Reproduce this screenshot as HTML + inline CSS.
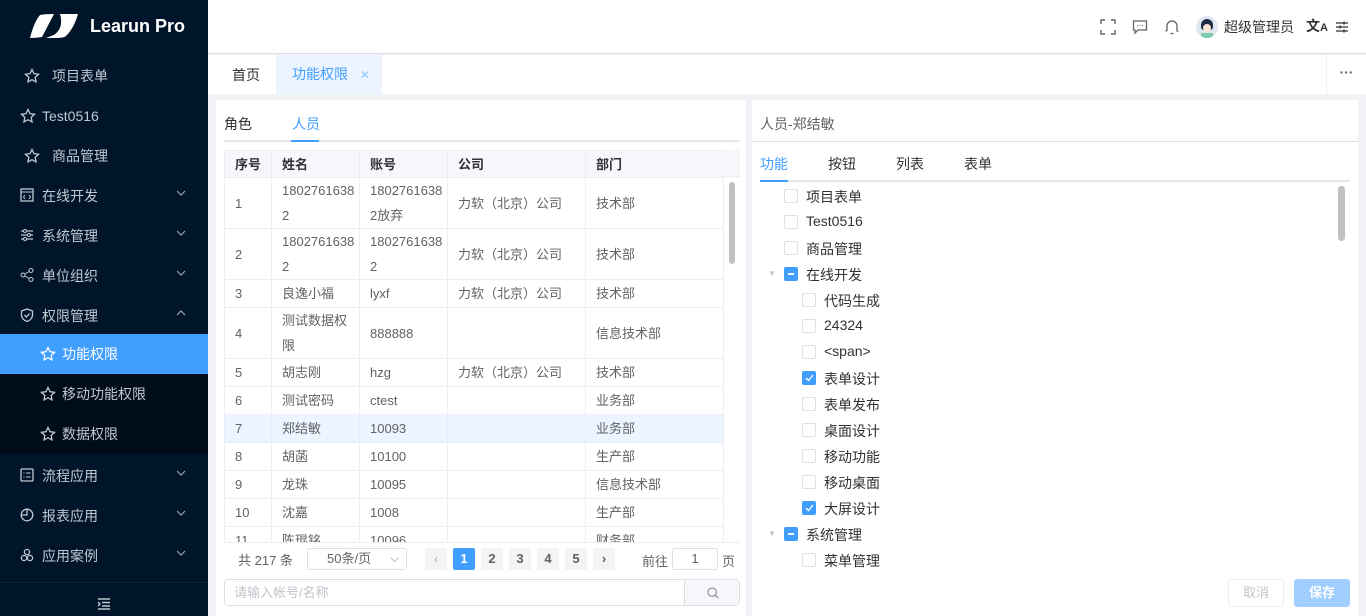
<!DOCTYPE html>
<html><head><meta charset="utf-8"><style>
*{box-sizing:border-box;margin:0;padding:0}
body{width:1366px;height:616px;overflow:hidden;position:relative;font-family:"Liberation Sans","Noto Sans CJK SC",sans-serif;font-size:14px;color:#303133;background:#f0f2f5}
.a{position:absolute}
.side{left:0;top:0;width:208px;height:616px;background:#001529;color:#bfcbd9}
.mi{position:absolute;left:0;width:208px;height:40px;line-height:40px;font-size:14px;color:#c0c8d2}
.mi svg{position:absolute;top:12px}
.mi svg.chev{left:176px;top:14px}
.hdr{left:208px;top:0;width:1158px;height:54px;background:#fff;border-bottom:1px solid #dcdfe6}
.tabs{left:208px;top:55px;width:1158px;height:39px;background:#fff}
.panel{background:#fff}
table{border-collapse:collapse;table-layout:fixed;font-size:13px;color:#606266}
td,th{border:1px solid #ebeef5;padding:0 10px;text-align:left;line-height:25px}
th{background:#f5f7fa;color:#303133;font-weight:bold;height:27px}
.cb{position:absolute;width:14px;height:14px;border:1px solid #dcdfe6;border-radius:2px;background:#fff}
.cb.on{background:#409eff;border-color:#409eff}
.tl{position:absolute;font-size:14px;color:#303133}
.pg{position:absolute;top:548px;width:22px;height:22px;background:#f4f4f5;border-radius:2px;text-align:center;line-height:22px;font-size:13px;font-weight:bold;color:#606266}
</style></head><body>
<div class="a side">
 <svg class="a" style="left:30px;top:14px" width="48" height="24" viewBox="0 0 48 24"><path d="M10 1Q14 0 24 0L12 23Q6 24 0 24Q4 8 10 1Z" fill="#fff"/><path d="M30 0H48Q44 14 36 22Q34 24 26 24H16L24 21Q34 14 30 0Z" fill="#fff"/></svg>
 <div class="a" style="left:90px;top:16px;color:#fff;font-size:18px;font-weight:bold">Learun Pro</div>
 <div class="mi" style="top:56px"><svg style="left:24px" width="16" height="16" viewBox="0 0 16 16"><path d="M8 1.5l2 4.2 4.5.6-3.3 3.1.8 4.5L8 11.7 4 13.9l.8-4.5L1.5 6.3 6 5.7z" fill="none" stroke="#c0c8d2" stroke-width="1.3"/></svg><span style="margin-left:52px">项目表单</span></div>
 <div class="mi" style="top:96px"><svg style="left:20px" width="16" height="16" viewBox="0 0 16 16"><path d="M8 1.5l2 4.2 4.5.6-3.3 3.1.8 4.5L8 11.7 4 13.9l.8-4.5L1.5 6.3 6 5.7z" fill="none" stroke="#c0c8d2" stroke-width="1.3"/></svg><span style="margin-left:42px">Test0516</span></div>
 <div class="mi" style="top:136px"><svg style="left:24px" width="16" height="16" viewBox="0 0 16 16"><path d="M8 1.5l2 4.2 4.5.6-3.3 3.1.8 4.5L8 11.7 4 13.9l.8-4.5L1.5 6.3 6 5.7z" fill="none" stroke="#c0c8d2" stroke-width="1.3"/></svg><span style="margin-left:52px">商品管理</span></div>
 <div class="mi" style="top:176px"><svg style="left:20px" width="14" height="14" viewBox="0 0 14 14"><rect x="1" y="1" width="12" height="12" fill="none" stroke="#c0c8d2" stroke-width="1.3"/><path d="M1 4h12M5 7l-1.5 2L5 11M9 7l1.5 2L9 11" stroke="#c0c8d2" fill="none"/></svg><span style="margin-left:42px">在线开发</span><svg class="chev" width="10" height="6" viewBox="0 0 10 6"><path d="M1 1l4 4 4-4" fill="none" stroke="#9aa5b1" stroke-width="1.2"/></svg></div>
 <div class="mi" style="top:216px"><svg style="left:20px" width="14" height="14" viewBox="0 0 14 14"><path d="M1 3h12M1 7h12M1 11h12" stroke="#c0c8d2" stroke-width="1.3"/><circle cx="5" cy="3" r="1.5" fill="#001529" stroke="#c0c8d2"/><circle cx="9" cy="7" r="1.5" fill="#001529" stroke="#c0c8d2"/><circle cx="5" cy="11" r="1.5" fill="#001529" stroke="#c0c8d2"/></svg><span style="margin-left:42px">系统管理</span><svg class="chev" width="10" height="6" viewBox="0 0 10 6"><path d="M1 1l4 4 4-4" fill="none" stroke="#9aa5b1" stroke-width="1.2"/></svg></div>
 <div class="mi" style="top:256px"><svg style="left:20px" width="14" height="14" viewBox="0 0 14 14"><circle cx="3" cy="7" r="2" fill="none" stroke="#c0c8d2"/><circle cx="11" cy="2.5" r="2" fill="none" stroke="#c0c8d2"/><circle cx="11" cy="11.5" r="2" fill="none" stroke="#c0c8d2"/><path d="M5 6l4-2.5M5 8l4 2.5" stroke="#c0c8d2"/></svg><span style="margin-left:42px">单位组织</span><svg class="chev" width="10" height="6" viewBox="0 0 10 6"><path d="M1 1l4 4 4-4" fill="none" stroke="#9aa5b1" stroke-width="1.2"/></svg></div>
 <div class="mi" style="top:296px"><svg style="left:20px" width="14" height="14" viewBox="0 0 14 14"><path d="M7 1l5.5 2v4c0 3-2.5 5.5-5.5 6.5C4 12.5 1.5 10 1.5 7V3z" fill="none" stroke="#c0c8d2" stroke-width="1.3"/><path d="M4.5 7l2 2 3-3.5" fill="none" stroke="#c0c8d2" stroke-width="1.3"/></svg><span style="margin-left:42px">权限管理</span><svg class="chev" width="10" height="6" viewBox="0 0 10 6"><path d="M1 5l4-4 4 4" fill="none" stroke="#9aa5b1" stroke-width="1.2"/></svg></div>
 <div class="a" style="left:0;top:374px;width:208px;height:80px;background:#000c17"></div>
 <div class="mi" style="top:334px;background:#409eff;color:#fff"><svg style="left:40px" width="16" height="16" viewBox="0 0 16 16"><path d="M8 1.5l2 4.2 4.5.6-3.3 3.1.8 4.5L8 11.7 4 13.9l.8-4.5L1.5 6.3 6 5.7z" fill="none" stroke="#fff" stroke-width="1.3"/></svg><span style="margin-left:62px">功能权限</span></div>
 <div class="mi" style="top:374px"><svg style="left:40px" width="16" height="16" viewBox="0 0 16 16"><path d="M8 1.5l2 4.2 4.5.6-3.3 3.1.8 4.5L8 11.7 4 13.9l.8-4.5L1.5 6.3 6 5.7z" fill="none" stroke="#c0c8d2" stroke-width="1.3"/></svg><span style="margin-left:62px">移动功能权限</span></div>
 <div class="mi" style="top:414px"><svg style="left:40px" width="16" height="16" viewBox="0 0 16 16"><path d="M8 1.5l2 4.2 4.5.6-3.3 3.1.8 4.5L8 11.7 4 13.9l.8-4.5L1.5 6.3 6 5.7z" fill="none" stroke="#c0c8d2" stroke-width="1.3"/></svg><span style="margin-left:62px">数据权限</span></div>
 <div class="mi" style="top:456px"><svg style="left:20px" width="14" height="14" viewBox="0 0 14 14"><rect x="1" y="1" width="12" height="12" rx="1" fill="none" stroke="#c0c8d2" stroke-width="1.3"/><path d="M3.5 5h1M6 5h4.5M3.5 9h1M6 9h4.5" stroke="#c0c8d2"/></svg><span style="margin-left:42px">流程应用</span><svg class="chev" width="10" height="6" viewBox="0 0 10 6"><path d="M1 1l4 4 4-4" fill="none" stroke="#9aa5b1" stroke-width="1.2"/></svg></div>
 <div class="mi" style="top:496px"><svg style="left:20px" width="14" height="14" viewBox="0 0 14 14"><circle cx="7" cy="7" r="5.8" fill="none" stroke="#c0c8d2" stroke-width="1.3"/><path d="M7 1v6H1" fill="none" stroke="#c0c8d2" stroke-width="1.3"/></svg><span style="margin-left:42px">报表应用</span><svg class="chev" width="10" height="6" viewBox="0 0 10 6"><path d="M1 1l4 4 4-4" fill="none" stroke="#9aa5b1" stroke-width="1.2"/></svg></div>
 <div class="mi" style="top:536px"><svg style="left:20px" width="14" height="14" viewBox="0 0 14 14"><circle cx="7" cy="4" r="2.6" fill="none" stroke="#c0c8d2" stroke-width="1.3"/><circle cx="4" cy="10" r="2.6" fill="none" stroke="#c0c8d2" stroke-width="1.3"/><circle cx="10" cy="10" r="2.6" fill="none" stroke="#c0c8d2" stroke-width="1.3"/></svg><span style="margin-left:42px">应用案例</span><svg class="chev" width="10" height="6" viewBox="0 0 10 6"><path d="M1 1l4 4 4-4" fill="none" stroke="#9aa5b1" stroke-width="1.2"/></svg></div>
 <div class="a" style="left:0;top:582px;width:208px;height:1px;background:#0d2238"></div>
 <svg class="a" style="left:97px;top:598px" width="14" height="12" viewBox="0 0 14 12"><path d="M1 1h12M5 4.5h8M5 8h8M1 11h12M1 4l2 2-2 2" stroke="#c0c8d2" stroke-width="1.4" fill="none"/></svg>
</div>

<div class="a hdr">
 <svg class="a" style="left:892px;top:19px" width="16" height="16" viewBox="0 0 16 16"><path d="M1 5V1h4M11 1h4v4M15 11v4h-4M5 15H1v-4" fill="none" stroke="#606266" stroke-width="1.4"/></svg>
 <svg class="a" style="left:924px;top:19px" width="16" height="16" viewBox="0 0 16 16"><path d="M1.5 2h13v9H6l-3 3v-3H1.5z" fill="none" stroke="#606266" stroke-width="1.3"/><path d="M5 6.5h.8M7.6 6.5h.8M10.2 6.5h.8" stroke="#606266" stroke-width="1.3"/></svg>
 <svg class="a" style="left:956px;top:18px" width="16" height="18" viewBox="0 0 16 18"><path d="M3 13V8a5 5 0 0110 0v5h1.5M1.5 13H3M6.5 15.5h3" fill="none" stroke="#606266" stroke-width="1.3"/></svg>
 <div class="a" style="left:988px;top:16px;width:22px;height:22px;border-radius:50%;background:#dfe8f1;overflow:hidden"><div style="position:absolute;left:5px;top:3px;width:12px;height:11px;border-radius:6px 6px 3px 3px;background:#1f2a44"></div><div style="position:absolute;left:7px;top:8px;width:8px;height:8px;border-radius:50%;background:#fbe3d4"></div><div style="position:absolute;left:5px;top:17px;width:12px;height:6px;background:#7fc8a9"></div></div>
 <div class="a" style="left:1016px;top:17px;font-size:14px;color:#303133">超级管理员</div>
 <div class="a" style="left:1098px;top:16px;font-size:14px;color:#303133;font-weight:bold">文<span style="font-size:11px">A</span></div>
 <svg class="a" style="left:1127px;top:20px" width="14" height="14" viewBox="0 0 14 14"><path d="M1 3h12M1 7h12M1 11h12" stroke="#303133" stroke-width="1.3"/><path d="M9 1.5v3M5 5.5v3M9 9.5v3" stroke="#303133" stroke-width="1.5"/></svg>
</div>
<div class="a tabs">
 <div class="a" style="left:24px;top:10px;font-size:14px">首页</div>
 <div class="a" style="left:68px;top:0;width:106px;height:39px;background:#ecf5ff;color:#409eff;line-height:39px;padding-left:16px">功能权限 <span style="margin-left:8px;font-size:12px;color:#8cc5ff">✕</span></div>
 <div class="a" style="left:1118px;top:0;width:40px;height:39px;border-left:1px solid #ebeef5;text-align:center;line-height:34px;color:#606266;font-weight:bold">···</div>
</div>

<div class="a panel" style="left:216px;top:100px;width:530px;height:516px"></div>
<div class="a" style="left:224px;top:114px;font-size:14px">角色</div>
<div class="a" style="left:292px;top:114px;font-size:14px;color:#409eff">人员</div>
<div class="a" style="left:224px;top:140px;width:516px;height:2px;background:#e4e7ed"></div>
<div class="a" style="left:291px;top:140px;width:28px;height:2px;background:#409eff"></div>
<div class="a" style="left:224px;top:150px;width:516px;height:392px;overflow:hidden">
<table style="width:500px">
<colgroup><col style="width:47px"><col style="width:88px"><col style="width:88px"><col style="width:138px"><col style="width:139px"></colgroup>
<tr><th>序号</th><th>姓名</th><th>账号</th><th>公司</th><th>部门</th></tr>
<tr style="height:51px"><td>1</td><td>1802761638<br>2</td><td>1802761638<br>2放弃</td><td>力软（北京）公司</td><td>技术部</td></tr>
<tr style="height:51px"><td>2</td><td>1802761638<br>2</td><td>1802761638<br>2</td><td>力软（北京）公司</td><td>技术部</td></tr>
<tr style="height:28px"><td>3</td><td>良逸小福</td><td>lyxf</td><td>力软（北京）公司</td><td>技术部</td></tr>
<tr style="height:51px"><td>4</td><td>测试数据权<br>限</td><td>888888</td><td></td><td>信息技术部</td></tr>
<tr style="height:28px"><td>5</td><td>胡志刚</td><td>hzg</td><td>力软（北京）公司</td><td>技术部</td></tr>
<tr style="height:28px"><td>6</td><td>测试密码</td><td>ctest</td><td></td><td>业务部</td></tr>
<tr style="height:28px;background:#ecf5ff"><td>7</td><td>郑结敏</td><td>10093</td><td></td><td>业务部</td></tr>
<tr style="height:28px"><td>8</td><td>胡菡</td><td>10100</td><td></td><td>生产部</td></tr>
<tr style="height:28px"><td>9</td><td>龙珠</td><td>10095</td><td></td><td>信息技术部</td></tr>
<tr style="height:28px"><td>10</td><td>沈嘉</td><td>1008</td><td></td><td>生产部</td></tr>
<tr style="height:28px"><td>11</td><td>陈琨铭</td><td>10096</td><td></td><td>财务部</td></tr>
</table>
<div class="a" style="left:499px;top:0;width:17px;height:392px;background:#fff;border-left:1px solid #ebeef5"></div>
<div class="a" style="left:499px;top:0;width:17px;height:27px;background:#f5f7fa;border-bottom:1px solid #ebeef5"></div>
<div class="a" style="left:505px;top:32px;width:6px;height:82px;border-radius:3px;background:#c1c1c1"></div>
</div>
<div class="a" style="left:224px;top:542px;width:516px;height:1px;background:#ebeef5"></div>
<div class="a" style="left:238px;top:550px;font-size:13px;color:#606266">共 217 条</div>
<div class="a" style="left:307px;top:548px;width:100px;height:22px;border:1px solid #dcdfe6;border-radius:3px;font-size:13px;color:#606266;line-height:20px;padding-left:19px">50条/页<svg style="position:absolute;right:7px;top:8px" width="9" height="5" viewBox="0 0 9 5"><path d="M.5.5l4 4 4-4" fill="none" stroke="#c0c4cc"/></svg></div>
<div class="pg" style="left:425px;color:#c0c4cc">‹</div>
<div class="pg" style="left:453px;background:#409eff;color:#fff">1</div>
<div class="pg" style="left:481px">2</div>
<div class="pg" style="left:509px">3</div>
<div class="pg" style="left:537px">4</div>
<div class="pg" style="left:565px">5</div>
<div class="pg" style="left:593px">›</div>
<div class="a" style="left:642px;top:551px;font-size:13px;color:#606266">前往</div>
<div class="a" style="left:672px;top:548px;width:46px;height:22px;border:1px solid #dcdfe6;border-radius:3px;text-align:center;line-height:20px;font-size:13px;color:#606266">1</div>
<div class="a" style="left:722px;top:551px;font-size:13px;color:#606266">页</div>
<div class="a" style="left:224px;top:579px;width:516px;height:27px;border:1px solid #dcdfe6;border-radius:4px;font-size:13px;color:#c0c4cc;line-height:25px;padding-left:9px">请输入帐号/名称</div>
<div class="a" style="left:684px;top:580px;width:55px;height:25px;background:#f5f7fa;border-left:1px solid #dcdfe6"><svg style="position:absolute;left:22px;top:7px" width="12" height="12" viewBox="0 0 12 12"><circle cx="5.2" cy="5.2" r="4.2" fill="none" stroke="#909399" stroke-width="1.2"/><path d="M8.3 8.3l3 3" stroke="#909399" stroke-width="1.2"/></svg></div>

<div class="a panel" style="left:752px;top:100px;width:606px;height:516px"></div>
<div class="a" style="left:760px;top:114px;font-size:14px;color:#606266">人员-郑结敏</div>
<div class="a" style="left:752px;top:141px;width:606px;height:1px;background:#dcdfe6"></div>
<div class="a" style="left:760px;top:154px;font-size:14px;color:#409eff">功能</div>
<div class="a" style="left:828px;top:154px;font-size:14px">按钮</div>
<div class="a" style="left:896px;top:154px;font-size:14px">列表</div>
<div class="a" style="left:964px;top:154px;font-size:14px">表单</div>
<div class="a" style="left:760px;top:180px;width:590px;height:2px;background:#e4e7ed"></div>
<div class="a" style="left:760px;top:180px;width:28px;height:2px;background:#409eff"></div>
<div class="a" style="left:1338px;top:186px;width:7px;height:55px;border-radius:4px;background:#c1c1c1"></div>

<div class="cb" style="left:784px;top:189px"></div><div class="tl" style="left:806px;top:187px">项目表单</div>
<div class="cb" style="left:784px;top:215px"></div><div class="tl" style="left:806px;top:213px">Test0516</div>
<div class="cb" style="left:784px;top:241px"></div><div class="tl" style="left:806px;top:239px">商品管理</div>
<div class="a" style="left:768px;top:269px;font-size:8px;color:#c0c4cc">▼</div>
<div class="cb on" style="left:784px;top:267px"><div style="position:absolute;left:3px;top:5px;width:6px;height:2px;background:#fff"></div></div><div class="tl" style="left:806px;top:265px">在线开发</div>
<div class="cb" style="left:802px;top:319px"></div>
<div class="cb" style="left:802px;top:293px"></div><div class="tl" style="left:824px;top:291px">代码生成</div>
<div class="tl" style="left:824px;top:317px">24324</div>
<div class="cb" style="left:802px;top:345px"></div><div class="tl" style="left:824px;top:343px">&lt;span&gt;</div>
<div class="cb on" style="left:802px;top:371px"><svg style="position:absolute;left:2px;top:2px" width="9" height="8" viewBox="0 0 9 8"><path d="M1 4l2.5 2.5L8 1" stroke="#fff" stroke-width="1.3" fill="none"/></svg></div><div class="tl" style="left:824px;top:369px">表单设计</div>
<div class="cb" style="left:802px;top:397px"></div><div class="tl" style="left:824px;top:395px">表单发布</div>
<div class="cb" style="left:802px;top:423px"></div><div class="tl" style="left:824px;top:421px">桌面设计</div>
<div class="cb" style="left:802px;top:449px"></div><div class="tl" style="left:824px;top:447px">移动功能</div>
<div class="cb" style="left:802px;top:475px"></div><div class="tl" style="left:824px;top:473px">移动桌面</div>
<div class="cb on" style="left:802px;top:501px"><svg style="position:absolute;left:2px;top:2px" width="9" height="8" viewBox="0 0 9 8"><path d="M1 4l2.5 2.5L8 1" stroke="#fff" stroke-width="1.3" fill="none"/></svg></div><div class="tl" style="left:824px;top:499px">大屏设计</div>
<div class="a" style="left:768px;top:529px;font-size:8px;color:#c0c4cc">▼</div>
<div class="cb on" style="left:784px;top:527px"><div style="position:absolute;left:3px;top:5px;width:6px;height:2px;background:#fff"></div></div><div class="tl" style="left:806px;top:525px">系统管理</div>
<div class="cb" style="left:802px;top:553px"></div><div class="tl" style="left:824px;top:551px">菜单管理</div>

<div class="a" style="left:1228px;top:579px;width:56px;height:28px;border:1px solid #ebeef5;border-radius:3px;text-align:center;line-height:26px;font-size:13px;color:#c0c4cc">取消</div>
<div class="a" style="left:1294px;top:579px;width:56px;height:28px;background:#a0cfff;border-radius:3px;text-align:center;line-height:28px;font-size:13px;color:#fff;font-weight:bold">保存</div>
</body></html>
